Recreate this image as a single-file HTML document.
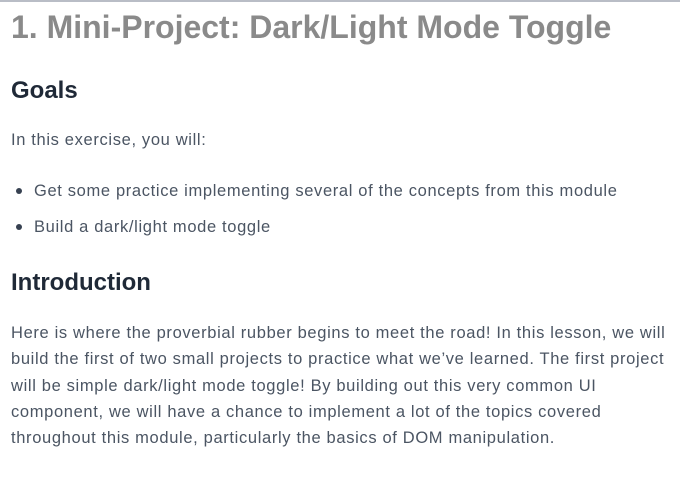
<!DOCTYPE html>
<html><head><style>
html,body{margin:0;padding:0;background:#fff;width:680px;height:479px;overflow:hidden}
body{font-family:"Liberation Sans",sans-serif;color:#4b5563;position:relative}
.topline{position:absolute;left:0;top:0;width:680px;height:2px;background:#b9bdc6}
div.t{position:absolute;left:11px;white-space:nowrap}
h1{position:absolute;left:11px;top:9px;margin:0;font-size:32px;font-weight:bold;color:#8a8a8a;white-space:nowrap;letter-spacing:0px}
h2{position:absolute;left:11px;margin:0;font-size:24px;font-weight:bold;color:#1f2937;white-space:nowrap}
.p{font-size:16.5px;line-height:26.3px;color:#4b5563;letter-spacing:0.65px}
.dot{position:absolute;left:16px;width:6px;height:6px;border-radius:50%;background:#374151}
</style></head><body>
<div class="topline"></div>
<h1>1. Mini-Project: Dark/Light Mode Toggle</h1>
<h2 style="top:77px">Goals</h2>
<div class="t p" style="top:127px">In this exercise, you will:</div>
<div class="dot" style="top:188px"></div>
<div class="t p" style="left:34px;top:178px">Get some practice implementing several of the concepts from this module</div>
<div class="dot" style="top:224px"></div>
<div class="t p" style="left:34px;top:214px">Build a dark/light mode toggle</div>
<h2 style="top:269px">Introduction</h2>
<div class="t p" style="top:320px">Here is where the proverbial rubber begins to meet the road! In this lesson, we will<br>build the first of two small projects to practice what we’ve learned. The first project<br>will be simple dark/light mode toggle! By building out this very common UI<br>component, we will have a chance to implement a lot of the topics covered<br>throughout this module, particularly the basics of DOM manipulation.</div>
</body></html>
